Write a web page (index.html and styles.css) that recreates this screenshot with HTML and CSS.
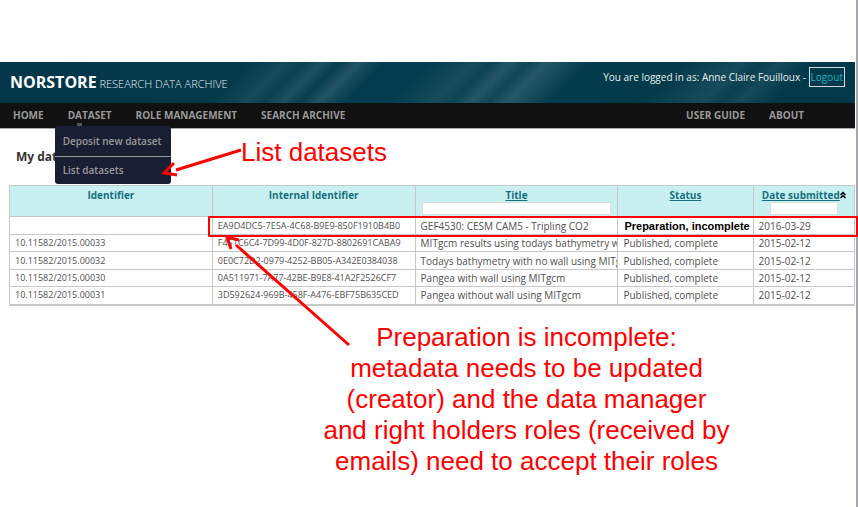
FILE: index.html
```html
<!DOCTYPE html>
<html lang="en">
<head>
<meta charset="utf-8">
<title>Norstore Research Data Archive</title>
<link rel="stylesheet" href="styles.css">
</head>
<body>
<div class="page">
  <header class="banner">
    <h1 class="brand"><strong>NORSTORE</strong> RESEARCH DATA ARCHIVE</h1>
    <p class="session">You are logged in as: Anne Claire Fouilloux - <a class="logout" href="#">Logout</a></p>
  </header>
  <nav class="nav">
    <a href="#">HOME</a>
    <div class="nav-item">
      <a class="has-menu" href="#">DATASET</a>
      <div class="menu">
        <a href="#">Deposit new dataset</a>
        <a href="#">List datasets</a>
      </div>
    </div>
    <a href="#">ROLE MANAGEMENT</a>
    <a href="#">SEARCH ARCHIVE</a>
    <a class="push" href="#">USER GUIDE</a>
    <a href="#">ABOUT</a>
  </nav>
  <main class="content">
    <h2 class="heading">My datasets</h2>
    <table class="datasets">
      <colgroup><col class="c-id"><col class="c-internal"><col class="c-title"><col class="c-status"><col class="c-date"></colgroup>
      <thead>
        <tr>
          <th>Identifier</th>
          <th>Internal Identifier</th>
          <th><a href="#">Title</a><input class="filter" type="text" aria-label="Filter by title"></th>
          <th><a href="#">Status</a></th>
          <th><a href="#">Date submitted</a><svg class="sort" viewBox="0 0 6 8" aria-hidden="true"><path d="M.5 4 3 1.500 5.500 4M.5 7 3 4.500 5.500 7"/></svg><input class="filter short" type="text" aria-label="Filter by date"></th>
        </tr>
      </thead>
      <tbody>
        <tr><td></td><td class="code">EA9D4DC5-7E5A-4C68-B9E9-850F1910B4B0</td><td>GEF4530: CESM CAM5 - Tripling CO2</td><td class="pending">Preparation, incomplete</td><td>2016-03-29</td></tr>
        <tr><td class="code">10.11582/2015.00033</td><td class="code">F451C6C4-7D99-4D0F-827D-8802691CABA9</td><td>MITgcm results using todays bathymetry with wall</td><td>Published, complete</td><td>2015-02-12</td></tr>
        <tr><td class="code">10.11582/2015.00032</td><td class="code">0E0C72D2-0979-4252-BB05-A342E0384038</td><td>Todays bathymetry with no wall using MITgcm</td><td>Published, complete</td><td>2015-02-12</td></tr>
        <tr><td class="code">10.11582/2015.00030</td><td class="code">0A511971-7A77-42BE-B9E8-41A2F2526CF7</td><td>Pangea with wall using MITgcm</td><td>Published, complete</td><td>2015-02-12</td></tr>
        <tr><td class="code">10.11582/2015.00031</td><td class="code">3D592624-969B-458F-A476-EBF75B635CED</td><td>Pangea without wall using MITgcm</td><td>Published, complete</td><td>2015-02-12</td></tr>
      </tbody>
    </table>
    <p class="note">Preparation is incomplete:<br>metadata needs to be updated<br>(creator) and the data manager<br>and right holders roles (received by<br>emails) need to accept their roles</p>
  </main>
  <p class="callout">List datasets</p>
  <div class="highlight"></div>
  <svg class="arrows" width="360" height="350" viewBox="0 0 360 350" aria-hidden="true">
    <path d="M241 150 176 170M174 163 164 173 177 175"/>
    <path d="M349 345 236 245"/>
    <path d="M231 249 227 237 239 240"/>
  </svg>
</div>
</body>
</html>
```

FILE: styles.css
```css
* { box-sizing: border-box; }

body {
  margin: 0;
  background: #fff;
  font-family: "Open Sans", "Noto Sans", sans-serif;
  font-size: 10px;
  color: #505050;
}

.page {
  position: relative;
  min-height: 100vh;
  padding: 62px 1px 0 0;
  border-right: 2px solid #a5a5ab;
}

.banner {
  display: flex;
  justify-content: space-between;
  align-items: flex-start;
  height: 41px;
  padding: 5px 10px 0;
  background:
    linear-gradient(135deg, transparent 28%, #ffffff14 32%, #ffffff08 34%, #ffffff1c 36%, #ffffff04 38%, #ffffff20 40%, transparent 43%, transparent 48%, #ffffff14 53%, #ffffff0a 55%, #ffffff22 57%, #ffffff0c 59%, #ffffff24 61%, transparent 66%, transparent 76%, #ffffff16 83%, #ffffff08 85%, #ffffff14 87%, transparent 91%),
    linear-gradient(90deg, #023648, #033d4f 50%, #023849);
  color: #e8eef0;
}

.brand {
  margin: 5px 0 0;
  font-size: 11px;
  font-weight: 300;
  line-height: 20px;
}

.brand strong {
  font-size: 16px;
  font-weight: 700;
  color: #fff;
}

.session { margin: 0; line-height: 20px; }

.logout {
  display: inline-block;
  padding: 0 1px;
  line-height: 18px;
  border: 1px solid #cfdadd;
  color: #13b5bb;
  text-decoration: none;
}

.nav {
  display: flex;
  gap: 24px;
  height: 26px;
  padding: 0 51px 0 13px;
  background: #111;
  border-bottom: 1px solid #aaa;
  font-weight: 700;
  line-height: 25px;
}

.nav a { color: #999; text-decoration: none; }
.nav .push { margin-left: auto; }
.nav-item { position: relative; }

.has-menu::after {
  content: "";
  position: absolute;
  left: 9px;
  top: 20px;
  width: 5px;
  height: 3px;
  background: #555;
}

.menu {
  position: absolute;
  z-index: 1;
  top: 23px;
  left: -13px;
  width: 116px;
  border-radius: 3px;
  background: #1a1e33;
  font-weight: 600;
}

.menu a {
  display: block;
  padding: 0 8px;
  line-height: 27px;
  white-space: nowrap;
}

.menu a:first-child {
  line-height: 30px;
  border-bottom: 1px solid #999;
}

.content { padding-left: 9px; }

.heading {
  margin: 0;
  padding: 18px 7px 19px;
  font-size: 12px;
  line-height: 19px;
  color: #333;
}

.datasets {
  width: 100%;
  table-layout: fixed;
  border-collapse: collapse;
  border: 1px solid #c8c8c8;
  border-bottom: 2px solid #c8c8c8;
}

.c-id, .c-internal, .c-title { width: 24%; }
.c-status { width: 16%; }
.c-date { width: 12%; }

.datasets th {
  height: 31px;
  padding: 2px 6px 0;
  border: 1px solid #c8c8c8;
  background: #c9f0f1;
  color: #15717f;
  line-height: 14px;
  vertical-align: top;
  white-space: nowrap;
}

.datasets th a { color: inherit; }

.filter {
  display: block;
  width: 100%;
  height: 13px;
  margin: 0 auto;
  padding: 0 2px;
  border: 1px solid #ddd;
  background: #fff;
  font: inherit;
}

.short { width: 68px; }

.sort {
  width: 6px;
  height: 8px;
  fill: none;
  stroke: #000;
  stroke-width: 1.5;
}

.datasets td {
  height: 17px;
  padding: 0 0 0 5px;
  border: 1px solid #c8c8c8;
  line-height: 16px;
  white-space: nowrap;
  overflow: hidden;
}

.datasets tr:nth-child(odd) td { height: 18px; }

.datasets .code { font-size: 9px; }

.datasets .pending {
  padding-left: 6px;
  font-family: "Liberation Sans", Arial, sans-serif;
  font-size: 11px;
  font-weight: 700;
  color: #000;
}

.note, .callout {
  margin: 0;
  font-family: "Liberation Sans", Arial, sans-serif;
  font-size: 26px;
  line-height: 31px;
  color: #f00;
}

.note {
  padding: 16px 0 0 189px;
  text-align: center;
}

.callout {
  position: absolute;
  top: 137px;
  left: 241px;
}

.highlight {
  position: absolute;
  top: 216px;
  left: 208px;
  right: -2px;
  height: 21px;
  border: 2px solid #f00;
  border-radius: 1px;
}

.arrows {
  position: absolute;
  top: 0;
  left: 0;
  z-index: 2;
  fill: none;
  stroke: #f00;
  stroke-width: 3;
  pointer-events: none;
}
```
